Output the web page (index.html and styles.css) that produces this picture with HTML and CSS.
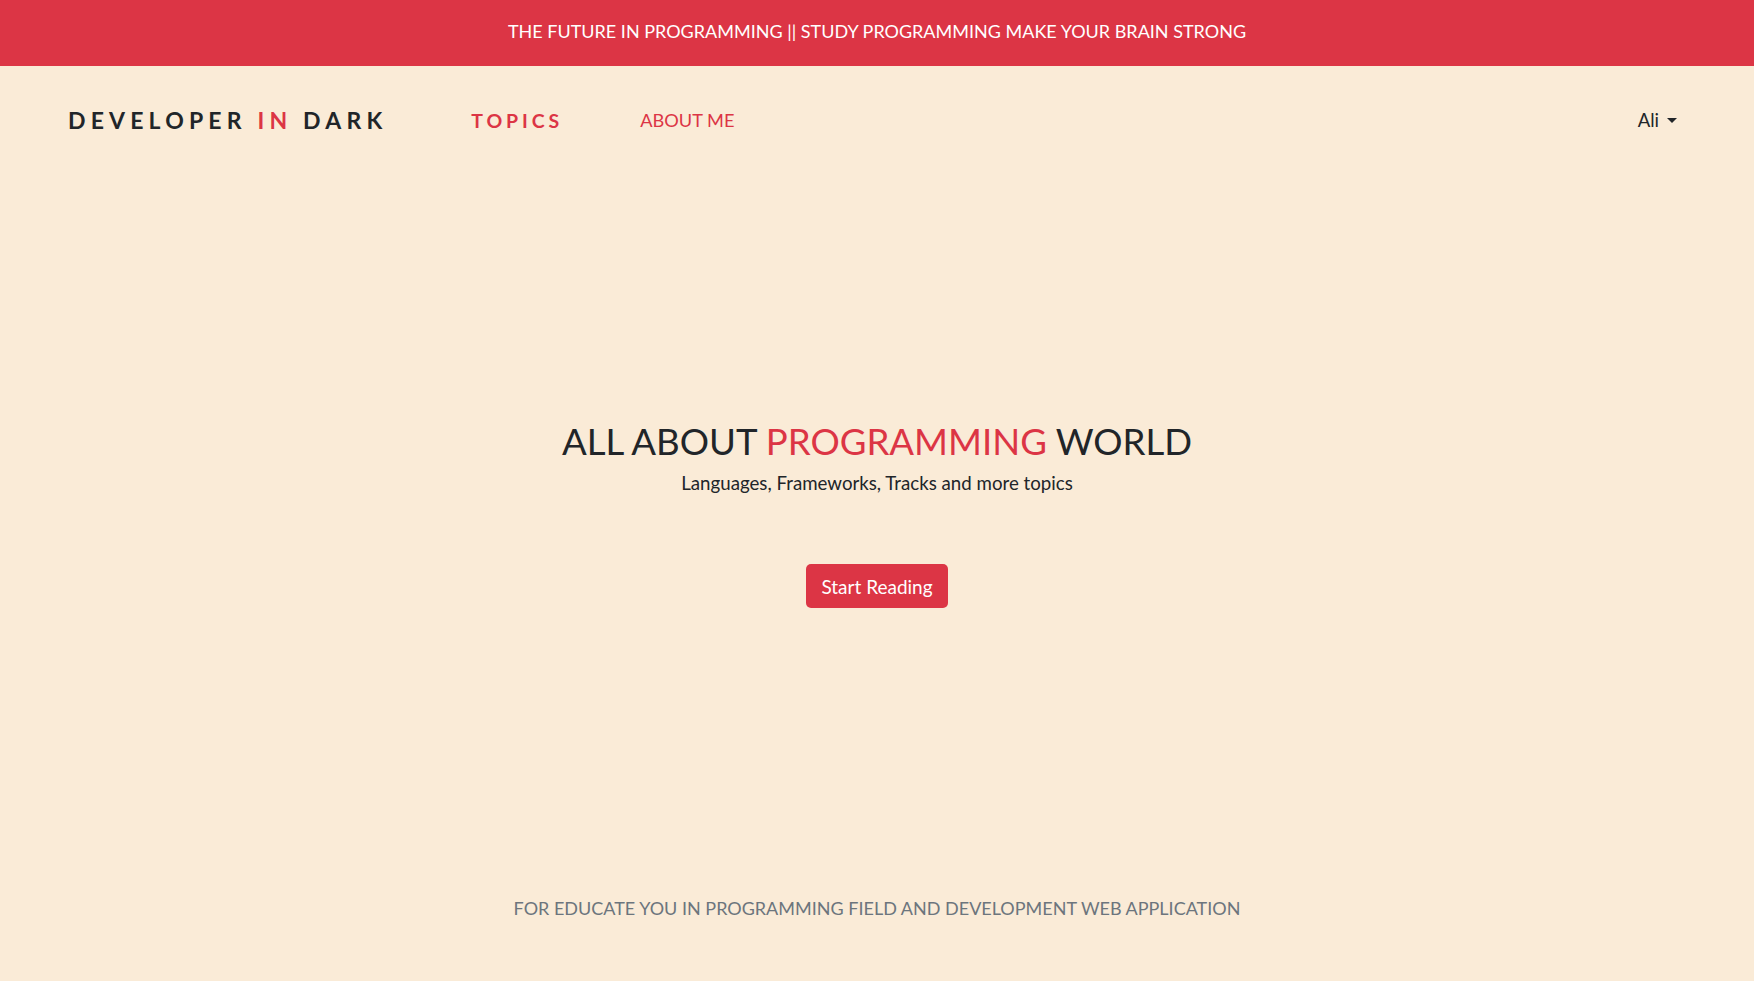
FILE: index.html
```html
<!DOCTYPE html>
<html lang="en">
<head>
<meta charset="utf-8">
<title>Developer In Dark</title>
<link rel="stylesheet" href="styles.css">
</head>
<body>
<div class="topbar">THE FUTURE IN PROGRAMMING || STUDY PROGRAMMING MAKE YOUR BRAIN STRONG</div>
<nav class="nav">
  <a class="brand" href="#">DEVELOPER <span class="red">IN</span> DARK</a>
  <div class="links">
    <a class="link link-topics" href="#">TOPICS</a>
    <a class="link link-about" href="#">ABOUT ME</a>
  </div>
  <div class="user">Ali <span class="caret"></span></div>
</nav>
<main class="hero">
  <h1 class="title">ALL ABOUT <span class="red">PROGRAMMING</span> WORLD</h1>
  <p class="subtitle">Languages, Frameworks, Tracks and more topics</p>
  <a class="btn" href="#">Start Reading</a>
</main>
<footer class="footer">FOR EDUCATE YOU IN PROGRAMMING FIELD AND DEVELOPMENT WEB APPLICATION</footer>
</body>
</html>
```

FILE: styles.css
```css
* { box-sizing: border-box; }
html, body { margin: 0; padding: 0; }
body {
  background: #faebd7;
  color: #212529;
  font-family: "Lato", "Noto Sans", sans-serif;
  height: 981px;
  overflow: hidden;
}
a { text-decoration: none; }
.red { color: #dc3545; }

.topbar {
  height: 66px;
  background: #dc3545;
  color: #fff;
  font-size: 18px;
  display: flex;
  align-items: center;
  justify-content: center;
  padding-bottom: 5px;
}

.nav {
  height: 108px;
  display: flex;
  align-items: center;
  padding: 0 77px 0 68px;
}
.brand {
  color: #212529;
  font-size: 23px;
  font-weight: 700;
  letter-spacing: 0.225em;
}
.links {
  display: flex;
  align-items: center;
  margin-left: 84px;
  flex: 1;
}
.link { color: #dc3545; }
.link-topics { font-size: 19.5px; font-weight: 700; letter-spacing: 0.2em; }
.link-about { margin-left: 77px; font-size: 18.2px; }
.user {
  font-size: 18.5px;
  display: flex;
  align-items: center;
  color: #212529;
}
.caret {
  display: inline-block;
  margin-left: 8px;
  width: 0;
  height: 0;
  border-top: 5px solid #212529;
  border-left: 5px solid transparent;
  border-right: 5px solid transparent;
}

.hero {
  display: flex;
  flex-direction: column;
  align-items: center;
  padding-top: 246px;
}
.title {
  margin: 0;
  font-size: 36.6px;
  font-weight: 400;
  line-height: 42px;
}
.subtitle {
  margin: 8px 0 0;
  font-size: 18.7px;
  line-height: 27px;
}
.btn {
  margin-top: 67px;
  width: 142px;
  height: 44px;
  background: #dc3545;
  color: #fff;
  border-radius: 5px;
  font-size: 19px;
  display: flex;
  align-items: center;
  justify-content: center;
}
.footer {
  margin-top: 287px;
  text-align: center;
  color: #6c757d;
  font-size: 18px;
  line-height: 27px;
}
```
